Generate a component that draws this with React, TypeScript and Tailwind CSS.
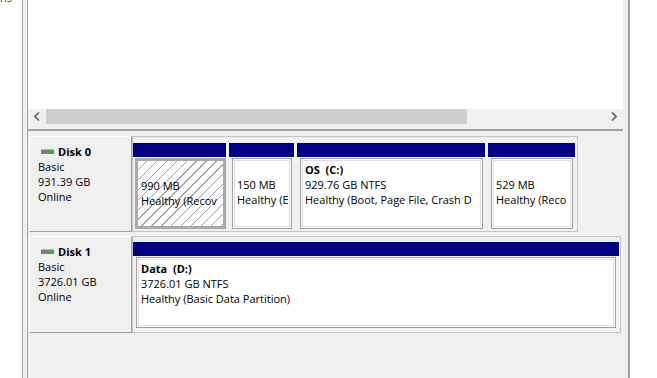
import React from "react";

type Part = {
  width: string;
  name?: string;
  size: string;
  status: string;
  hatched?: boolean;
};

// status strings are cut where the boxes cut them in the console
const disk0: Part[] = [
  { width: "w-[93px]", size: "990 MB", status: "Healthy (Recov", hatched: true },
  { width: "w-[65px]", size: "150 MB", status: "Healthy (E" },
  { width: "w-[188px]", name: "OS\u00a0\u00a0(C:)", size: "929.76 GB NTFS", status: "Healthy (Boot, Page File, Crash D" },
  { width: "w-[87px]", size: "529 MB", status: "Healthy (Reco" },
];

function DriveIcon() {
  return (
    <svg width="13" height="5" viewBox="0 0 13 5" className="shrink-0">
      <rect x="0" y="0" width="13" height="5" fill="#7c7c7c" />
      <rect x="0" y="0" width="13" height="1" fill="#b8b8b8" />
      <rect x="9" y="1" width="3" height="3" fill="#2fb84a" />
    </svg>
  );
}

function Chevron({ dir }: { dir: "left" | "right" }) {
  return (
    <svg width="6" height="9" viewBox="0 0 6 9">
      <path
        d={dir === "left" ? "M5 0.5 L1 4.5 L5 8.5" : "M1 0.5 L5 4.5 L1 8.5"}
        fill="none"
        stroke="#606060"
        strokeWidth="1.6"
      />
    </svg>
  );
}

function DiskLabel({ name, size }: { name: string; size: string }) {
  return (
    <div className="w-[103px] shrink-0 border border-t-white border-l-white border-r-[#a0a0a0] border-b-[#a0a0a0] pl-[8px] pt-[7px] leading-[15px]">
      <div className="flex items-center gap-[4px] pl-[3px]">
        <DriveIcon />
        <span className="font-bold">{name}</span>
      </div>
      <div>Basic</div>
      <div>{size}</div>
      <div>Online</div>
    </div>
  );
}

function Partition({ part }: { part: Part }) {
  return (
    <div className={`${part.width} shrink-0 flex flex-col`}>
      <div className="h-[14px] bg-[#000080]" />
      {part.hatched ? (
        <div className="mt-[1px] ml-[2px] h-[71px] border-[3px] border-[#aaaaaa] bg-white bg-[repeating-linear-gradient(135deg,transparent_0_6px,#a4a4a4_6px_7px)] pl-[3px] pt-[2px] leading-[15px] whitespace-nowrap overflow-hidden">
          <div>&nbsp;</div>
          <div>{part.size}</div>
          <div>{part.status}</div>
        </div>
      ) : (
        <div className="mt-[1px] ml-[3px] mr-[2px] h-[71px] border border-[#a0a0a0] bg-white shadow-[inset_0_0_0_1px_#fff,inset_0_0_0_2px_#dedede] pl-[4px] pt-[3px] leading-[15px] whitespace-nowrap overflow-hidden">
          <div className="font-bold">{part.name ?? "\u00a0"}</div>
          <div>{part.size}</div>
          <div>{part.status}</div>
        </div>
      )}
    </div>
  );
}

export default function App() {
  return (
    <div className="w-[657px] h-[378px] overflow-hidden bg-white flex font-['Open_Sans',sans-serif] text-[11px] text-black">
      <div className="w-[22px] shrink-0 overflow-hidden">
        <div className="-mt-[10px] text-[11px] leading-[15px] text-[#444]">ns</div>
      </div>

      <div className="w-[608px] shrink-0 flex flex-col bg-[#f0f0f0] border-l border-[#a8a8a8] border-r-2 border-r-[#a0a0a0] pl-[4px] pr-[5px]">
        <div className="flex-1 flex flex-col border-l border-[#a0a0a0]">
          {/* volume list pane */}
          <div className="border-b-2 border-[#a4a4a4]">
            <div className="h-[109px] bg-white" />
            <div className="h-[15px] flex items-center bg-[#f0f0f0]">
              <div className="w-[18px] flex justify-center">
                <Chevron dir="left" />
              </div>
              <div className="w-[421px] h-full bg-[#cdcdcd]" />
              <div className="flex-1" />
              <div className="w-[18px] flex justify-center">
                <Chevron dir="right" />
              </div>
            </div>
            <div className="h-[5px] bg-[#f0f0f0]" />
          </div>

          {/* disk map pane */}
          <div className="flex-1 pt-[5px] pl-[1px] flex flex-col gap-[4px]">
            <div className="flex h-[96px]">
              <DiskLabel name="Disk 0" size="931.39 GB" />
              <div className="w-[446px] border border-[#c4c4c4] pt-[6px] pb-[2px] flex gap-[3px]">
                {disk0.map((p) => (
                  <Partition key={p.size + p.status} part={p} />
                ))}
              </div>
            </div>

            <div className="flex h-[97px]">
              <DiskLabel name="Disk 1" size="3726.01 GB" />
              <div className="w-[489px] border border-[#c4c4c4] pt-[5px] pb-[4px] flex">
                <div className="w-[486px] shrink-0 flex flex-col">
                  <div className="h-[14px] bg-[#000080]" />
                  <div className="mt-[1px] ml-[3px] mr-[3px] h-[71px] border border-[#a0a0a0] bg-white shadow-[inset_0_0_0_1px_#fff,inset_0_0_0_2px_#dedede] pl-[4px] pt-[3px] leading-[15px] whitespace-nowrap overflow-hidden">
                    <div className="font-bold">Data&nbsp;&nbsp;(D:)</div>
                    <div>3726.01 GB NTFS</div>
                    <div>Healthy (Basic Data Partition)</div>
                  </div>
                </div>
              </div>
            </div>
          </div>
        </div>
      </div>

      <div className="flex-1 bg-white" />
    </div>
  );
}
